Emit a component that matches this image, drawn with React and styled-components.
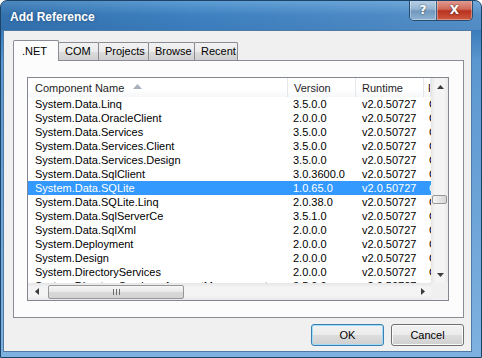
import styled, { createGlobalStyle } from 'styled-components';

const GlobalStyle = createGlobalStyle`
  html, body {
    margin: 0;
    padding: 0;
    background: #ffffff;
  }
  * {
    box-sizing: border-box;
  }
`;

const rows = [
  { name: 'System.Data.Linq', version: '3.5.0.0' },
  { name: 'System.Data.OracleClient', version: '2.0.0.0' },
  { name: 'System.Data.Services', version: '3.5.0.0' },
  { name: 'System.Data.Services.Client', version: '3.5.0.0' },
  { name: 'System.Data.Services.Design', version: '3.5.0.0' },
  { name: 'System.Data.SqlClient', version: '3.0.3600.0' },
  { name: 'System.Data.SQLite', version: '1.0.65.0', selected: true },
  { name: 'System.Data.SQLite.Linq', version: '2.0.38.0' },
  { name: 'System.Data.SqlServerCe', version: '3.5.1.0' },
  { name: 'System.Data.SqlXml', version: '2.0.0.0' },
  { name: 'System.Deployment', version: '2.0.0.0' },
  { name: 'System.Design', version: '2.0.0.0' },
  { name: 'System.DirectoryServices', version: '2.0.0.0' },
  { name: 'System.DirectoryServices.AccountManagement', version: '3.5.0.0' },
];

const tabs = [
  { label: '.NET', width: 46, active: true },
  { label: 'COM', width: 41 },
  { label: 'Projects', width: 51 },
  { label: 'Browse', width: 47 },
  { label: 'Recent', width: 44 },
];

const Arrow = ({ dir }) => {
  const pts = {
    up: '0,4 7,4 3.5,0',
    down: '0,0 7,0 3.5,4',
    left: '4,0 4,7 0,3.5',
    right: '0,0 0,7 4,3.5',
  }[dir];
  const vertical = dir === 'up' || dir === 'down';
  return (
    <svg width={vertical ? 7 : 4} height={vertical ? 4 : 7} viewBox={vertical ? '0 0 7 4' : '0 0 4 7'}>
      <polygon points={pts} fill="#3c3c3c" />
    </svg>
  );
};

const App = () => {
  return (
    <>
      <GlobalStyle />
      <Window>
        <TitleBar>
          <Title>Add Reference</Title>
          <CaptionButtons>
            <CaptionButton kind="help">?</CaptionButton>
            <CaptionButton kind="close">X</CaptionButton>
          </CaptionButtons>
        </TitleBar>
        <Client>
          <TabStrip>
            {tabs.map((t) => (
              <Tab key={t.label} $active={t.active} $width={t.width}>
                {t.label}
              </Tab>
            ))}
          </TabStrip>
          <TabPanel>
            <ListView>
              <ListMain>
                <Header>
                  <HeaderCell $pad={7}>
                    Component Name
                    <SortMark>
                      <svg width="9" height="5" viewBox="0 0 9 5">
                        <polygon points="0,5 9,5 4.5,0" fill="#a7b1bd" />
                      </svg>
                    </SortMark>
                  </HeaderCell>
                  <HeaderCell $pad={6}>Version</HeaderCell>
                  <HeaderCell $pad={6}>Runtime</HeaderCell>
                  <HeaderCell $pad={4}>Path</HeaderCell>
                </Header>
                {rows.map((r) => (
                  <Row key={r.name} $selected={r.selected}>
                    <Cell $pad={7}>{r.name}</Cell>
                    <Cell $pad={5}>{r.version}</Cell>
                    <Cell $pad={6}>v2.0.50727</Cell>
                    <Cell $pad={5}>C:\</Cell>
                  </Row>
                ))}
              </ListMain>
              <VScroll>
                <ScrollButton $v>
                  <Arrow dir="up" />
                </ScrollButton>
                <VTrack>
                  <VThumb $offset={100} />
                </VTrack>
                <ScrollButton $v>
                  <Arrow dir="down" />
                </ScrollButton>
              </VScroll>
              <HScroll>
                <ScrollButton>
                  <Arrow dir="left" />
                </ScrollButton>
                <HTrack>
                  <HThumb $offset={3} $width={136}>
                    <svg width="7" height="6" viewBox="0 0 7 6">
                      <path d="M0.5 0v6M3.5 0v6M6.5 0v6" stroke="#6b6b6b" strokeWidth="1" />
                    </svg>
                  </HThumb>
                </HTrack>
                <ScrollButton>
                  <Arrow dir="right" />
                </ScrollButton>
              </HScroll>
              <Corner />
            </ListView>
          </TabPanel>
          <ButtonRow>
            <DialogButton $default>OK</DialogButton>
            <DialogButton>Cancel</DialogButton>
          </ButtonRow>
        </Client>
      </Window>
    </>
  );
};

export default App;

const Window = styled.div`
  width: 482px;
  height: 358px;
  display: flex;
  flex-direction: column;
  border: 1px solid #1b4468;
  border-radius: 7px 7px 0 0;
  background: linear-gradient(180deg, #5e9dd4 0px, #3e80c0 14px, #3a7bbb 29px, #5b97cf 60px, #7eb1e0 100%);
  overflow: hidden;
`;

const TitleBar = styled.div`
  height: 29px;
  flex: none;
  display: flex;
  align-items: flex-start;
  justify-content: space-between;
  padding: 0 8px 0 9px;
  background: linear-gradient(90deg, rgba(20, 70, 120, 0.25) 0%, rgba(255, 255, 255, 0) 40%, rgba(255, 255, 255, 0.12) 100%);
`;

const Title = styled.div`
  margin-top: 9px;
  font-family: 'Liberation Sans', Arial, sans-serif;
  font-weight: bold;
  font-size: 12px;
  color: #ffffff;
  text-shadow: 0 0 3px rgba(20, 50, 90, 0.6);
`;

const CaptionButtons = styled.div`
  display: flex;
  margin-top: -1px;
  border: 1px solid #274c6f;
  border-top: none;
  border-radius: 0 0 5px 5px;
  overflow: hidden;
`;

const CaptionButton = styled.div`
  width: ${(p) => (p.kind === 'close' ? 36 : 26)}px;
  height: 20px;
  display: flex;
  align-items: center;
  justify-content: center;
  font-family: 'DejaVu Sans', sans-serif;
  font-weight: bold;
  font-size: 12px;
  color: #ffffff;
  text-shadow: 0 0 2px rgba(0, 0, 0, 0.7);
  background: ${(p) =>
    p.kind === 'close'
      ? 'linear-gradient(180deg, #e3a095 0%, #cf6a5a 45%, #b8321f 55%, #cf5a40 100%)'
      : 'linear-gradient(180deg, #bcd2e6 0%, #94b5d3 45%, #7198bd 55%, #8fb3d4 100%)'};
  border-left: ${(p) => (p.kind === 'close' ? '1px solid #3d5f80' : 'none')};
  box-shadow: inset 0 0 0 1px rgba(255, 255, 255, 0.35);
`;

const Client = styled.div`
  flex: 1;
  display: flex;
  flex-direction: column;
  margin: 0 9px 5px 2px;
  padding: 9px 7px 0 9px;
  background: #f0f0f0;
  border: 1px solid #4f7aa3;
`;

const TabStrip = styled.div`
  height: 20px;
  display: flex;
  align-items: flex-end;
  position: relative;
  z-index: 1;
`;

const Tab = styled.div`
  width: ${(p) => p.$width}px;
  height: ${(p) => (p.$active ? 21 : 18)}px;
  margin-bottom: ${(p) => (p.$active ? -1 : 0)}px;
  margin-left: ${(p) => (p.$active ? 0 : -1)}px;
  padding-left: ${(p) => (p.$active ? 8 : 6)}px;
  padding-top: ${(p) => (p.$active ? 4 : 2)}px;
  border: 1px solid #898c95;
  border-bottom: none;
  border-radius: 2px 2px 0 0;
  background: ${(p) => (p.$active ? '#fcfcfc' : 'linear-gradient(180deg, #f2f2f2 0%, #ebebeb 50%, #dddddd 51%, #cfcfcf 100%)')};
  font-family: 'Liberation Sans', Arial, sans-serif;
  font-size: 11px;
  color: #000000;
  z-index: ${(p) => (p.$active ? 2 : 1)};
  &:first-child {
    margin-left: 0;
  }
`;

const TabPanel = styled.div`
  height: 258px;
  flex: none;
  padding: 16px 14px 16px 13px;
  border: 1px solid #898c95;
  background: #fcfcfc;
`;

const ListView = styled.div`
  height: 224px;
  display: grid;
  grid-template-columns: 1fr 17px;
  grid-template-rows: 1fr 17px;
  border: 1px solid #828790;
  background: #ffffff;
  font-family: 'Liberation Sans', Arial, sans-serif;
  font-size: 11px;
  color: #000000;
`;

const ListMain = styled.div`
  overflow: hidden;
  min-width: 0;
`;

const columns = '260px 68px 68px 1fr';

const Header = styled.div`
  height: 19px;
  display: grid;
  grid-template-columns: ${columns};
  background: linear-gradient(180deg, #ffffff 0%, #ffffff 60%, #f6f7f9 100%);
`;

const HeaderCell = styled.div`
  display: flex;
  align-items: center;
  padding-left: ${(p) => p.$pad}px;
  border-right: 1px solid #e3e6eb;
  color: #1e1e1e;
  white-space: nowrap;
  overflow: hidden;
`;

const SortMark = styled.span`
  display: inline-flex;
  margin-left: 9px;
  margin-top: -3px;
`;

const Row = styled.div`
  height: 14px;
  line-height: 14px;
  display: grid;
  grid-template-columns: ${columns};
  background: ${(p) => (p.$selected ? '#3399ff' : 'transparent')};
  color: ${(p) => (p.$selected ? '#ffffff' : '#000000')};
`;

const Cell = styled.div`
  padding-left: ${(p) => p.$pad}px;
  white-space: nowrap;
  overflow: hidden;
`;

const VScroll = styled.div`
  display: flex;
  flex-direction: column;
  background: linear-gradient(90deg, #e6e6e6 0%, #f4f4f4 25%, #f4f4f4 75%, #e9e9e9 100%);
`;

const ScrollButton = styled.div`
  width: 17px;
  height: 17px;
  flex: none;
  display: flex;
  align-items: center;
  justify-content: center;
  padding-left: ${(p) => (p.$v ? 1 : 0)}px;
`;

const VTrack = styled.div`
  flex: 1;
  padding: 0 1px;
`;

const VThumb = styled.div`
  margin-top: ${(p) => p.$offset}px;
  height: 9px;
  border: 1px solid #979797;
  border-radius: 2px;
  background: linear-gradient(90deg, #f5f5f5 0%, #e6e6e6 50%, #d6d6d6 100%);
`;

const HScroll = styled.div`
  display: flex;
  align-items: center;
  background: linear-gradient(180deg, #e6e6e6 0%, #f4f4f4 25%, #f4f4f4 75%, #e9e9e9 100%);
`;

const HTrack = styled.div`
  flex: 1;
  height: 17px;
  display: flex;
  align-items: center;
`;

const HThumb = styled.div`
  margin-left: ${(p) => p.$offset}px;
  width: ${(p) => p.$width}px;
  height: 14px;
  display: flex;
  align-items: center;
  justify-content: center;
  border: 1px solid #979797;
  border-radius: 2px;
  background: linear-gradient(180deg, #f6f6f6 0%, #e9e9e9 50%, #d8d8d8 51%, #d4d4d4 100%);
`;

const Corner = styled.div`
  background: #f0f0f0;
`;

const ButtonRow = styled.div`
  display: flex;
  justify-content: flex-end;
  gap: 7px;
  margin-top: 6px;
`;

const DialogButton = styled.div`
  width: 73px;
  height: 22px;
  display: flex;
  align-items: center;
  justify-content: center;
  border: 1px solid ${(p) => (p.$default ? '#3c7fb1' : '#707070')};
  border-radius: 3px;
  background: linear-gradient(180deg, #f2f2f2 0%, #ebebeb 50%, #dddddd 51%, #cfcfcf 100%);
  box-shadow: inset 0 0 0 1px ${(p) => (p.$default ? '#9fdcf7' : '#fbfbfb')};
  font-family: 'Liberation Sans', Arial, sans-serif;
  font-size: 11px;
  color: #000000;
`;
